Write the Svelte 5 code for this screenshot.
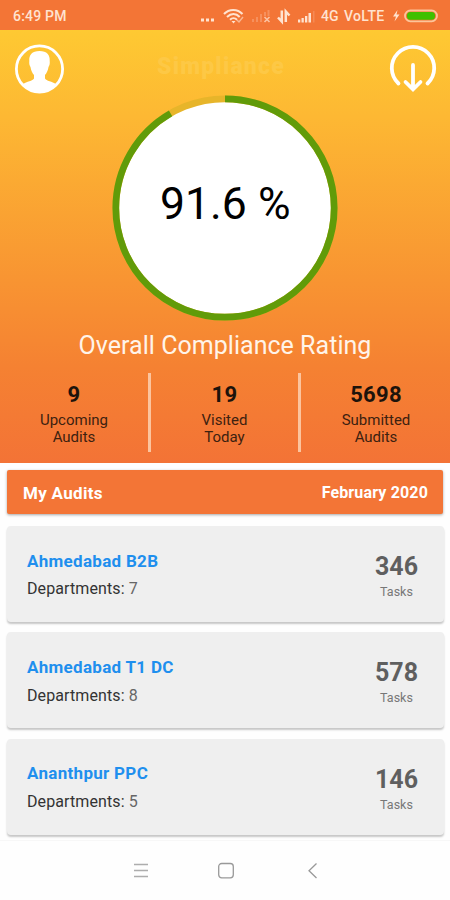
<script lang="ts">
  const rating = 91.6;
  const radius = 109.2;
  const circumference = 2 * Math.PI * radius;
  const offset = circumference * (1 - rating / 100);

  const stats = [
    { value: 9, label: ['Upcoming', 'Audits'] },
    { value: 19, label: ['Visited', 'Today'] },
    { value: 5698, label: ['Submitted', 'Audits'] },
  ];

  const audits = [
    { name: 'Ahmedabad B2B', departments: 7, tasks: 346 },
    { name: 'Ahmedabad T1 DC', departments: 8, tasks: 578 },
    { name: 'Ananthpur PPC', departments: 5, tasks: 146 },
  ];
</script>

<div class="screen">
  <div class="status">
    <span class="time">6:49 PM</span>
    <svg class="signals" width="118" height="30" viewBox="0 0 118 30" fill="#ffe3d0">
      <rect x="1" y="17.5" width="3" height="3" />
      <rect x="6" y="17.5" width="3" height="3" />
      <rect x="11" y="17.5" width="3" height="3" />
      <!-- Wifi -->
      <g fill="none" stroke="#ffe3d0" stroke-width="2">
        <path d="M24 13 C29 7.500 37.500 7.500 42.500 13" />
        <path d="M27 16 C31 12 36 12 39.700 16" />
        <path d="M30 18.700 C32 16.800 35 16.800 37 18.700" />
      </g>
      <path d="M31.500 20 L33.500 22.500 L35.500 20 Z" />
      <path d="M37 19 L39 21 L43 16" fill="none" stroke="#ffe3d0" stroke-opacity="0.6" stroke-width="1.5" />
      <!-- Missing SIM -->
      <g opacity="0.25">
        <rect x="52" y="18" width="2" height="3" />
        <rect x="56" y="16" width="2" height="5" />
        <rect x="60" y="13" width="2" height="8" />
        <rect x="64" y="11" width="2" height="4" />
        <rect x="67.5" y="9" width="2" height="6" />
      </g>
      <path d="M64.500 16 L69.500 21 M69.500 16 L64.500 21" stroke="#ffe3d0" stroke-opacity="0.7" stroke-width="1.6" />
      <!-- Data arrows -->
      <path d="M81.800 9.500 V20.500 L78 16.500 M85.800 21 V10.500 L89.500 14.500" fill="none" stroke="#ffe3d0" stroke-width="2.5" />
      <rect x="98" y="18.5" width="2.3" height="3" />
      <rect x="101.5" y="17" width="2.3" height="4.5" />
      <rect x="105" y="15" width="2.3" height="6.5" />
      <rect x="108.5" y="12" width="2.5" height="9.5" />
      <rect x="113" y="10" width="1.5" height="11.5" opacity="0.2" />
    </svg>
    <span class="network">4G</span>
    <span class="volte">VoLTE</span>
    <svg class="power" width="46" height="30" viewBox="0 0 46 30">
      <path d="M5.500 9 L1 15.500 H4 L2.500 20.500 L7.500 13.500 H4.500 Z" fill="#ffe3d0" />
      <rect x="13" y="9.5" width="32" height="10.8" rx="5.400" fill="none" stroke="#fcc49a" stroke-width="1.8" />
      <rect x="15" y="11" width="28" height="7.8" rx="3.5" fill="#3fc000" />
    </svg>
  </div>

  <section class="hero">
    <header>
      <svg width="50" height="50" viewBox="0 0 50 50">
        <circle cx="25.5" cy="25" r="23.1" fill="none" stroke="#fff" stroke-width="2.8" />
        <path
          d="M25.500 7 C18 7 14.800 11 15.300 17 C15 19.500 15.500 21.500 16.500 23 C17 26.500 18.300 29 20 31 V34.500 C19 37 12.500 37.500 9 40 C13 45.500 19 48.500 25.500 48.500 C32 48.500 38 45.500 42 40 C38.500 37.500 32 37 31 34.500 V31 C32.700 29 34 26.500 34.500 23 C35.500 21.500 36 19.500 35.700 17 C36.200 11 33 7 25.500 7 Z"
          fill="#fff"
        />
      </svg>
      <span class="brand">Simpliance</span>
      <svg width="50" height="50" viewBox="0 0 50 50" fill="none" stroke="#fff" stroke-width="3.8" stroke-linecap="round">
        <path d="M10.500 39.500 A21.200 21.200 0 1 1 39.500 39.500" />
        <path d="M25 21 V45 M17.500 38 L25 45.300 L32.500 38" />
      </svg>
    </header>

    <div class="ring">
      <svg width="226" height="226" viewBox="0 0 226 226">
        <circle cx="113" cy="113" r={radius} fill="#fff" stroke="#e7b52a" stroke-width="6.7" />
        <circle
          cx="113"
          cy="113"
          r={radius}
          fill="none"
          stroke="#619b09"
          stroke-width="6.7"
          stroke-dasharray={circumference}
          stroke-dashoffset={offset}
          transform="rotate(-90 113 113)"
        />
        <text x="113.3" y="124" text-anchor="middle">{rating} %</text>
      </svg>
    </div>

    <h1>Overall Compliance Rating</h1>

    <div class="stats">
      {#each stats as stat}
        <div class="stat">
          <strong>{stat.value}</strong>
          <span>{stat.label[0]}<br />{stat.label[1]}</span>
        </div>
      {/each}
    </div>
  </section>

  <main>
    <div class="heading">
      <span>My Audits</span>
      <span class="month">February 2020</span>
    </div>

    {#each audits as audit}
      <article class="card">
        <div>
          <h2>{audit.name}</h2>
          <p>Departments: <span>{audit.departments}</span></p>
        </div>
        <div class="tasks">
          <strong>{audit.tasks}</strong>
          <span>Tasks</span>
        </div>
      </article>
    {/each}
  </main>

  <nav>
    <svg width="16" height="18" viewBox="0 0 16 18" stroke="#adadad" stroke-width="1.3">
      <path d="M1 2.500 H15 M1 8.500 H15 M1 14.500 H15" />
    </svg>
    <svg width="18" height="18" viewBox="0 0 18 18" fill="none" stroke="#999" stroke-width="1.3">
      <rect x="1.7" y="1.5" width="14.6" height="14.3" rx="3" />
    </svg>
    <svg width="12" height="18" viewBox="0 0 12 18" fill="none" stroke="#999" stroke-width="1.3">
      <path d="M9.500 1.500 L2 8.700 L9.500 16" />
    </svg>
  </nav>
</div>

<style>
  :global(body) {
    margin: 0;
    background: #fff;
  }

  .screen {
    width: 450px;
    height: 900px;
    overflow: hidden;
    display: flex;
    flex-direction: column;
    font-family: Roboto, sans-serif;
    background: #fefefe;
  }

  svg {
    display: block;
    flex: none;
  }

  .status {
    height: 30px;
    flex: none;
    display: flex;
    align-items: center;
    box-sizing: border-box;
    padding: 1px 12px 0 13px;
    background: #f37536;
    color: #ffe3d0;
    font-size: 14px;
    font-weight: 500;
    line-height: 30px;
  }

  .time {
    letter-spacing: 0.2px;
  }

  .signals {
    margin-left: auto;
  }

  .network {
    width: 19px;
    margin: 0 4px 0 3px;
  }

  .volte {
    width: 40px;
    margin-right: 8px;
    letter-spacing: 0.3px;
  }

  .hero {
    height: 433px;
    flex: none;
    background: linear-gradient(#fec932 0%, #fdb833 20%, #f89432 58%, #f58132 78%, #f37336 100%);
  }

  header {
    display: flex;
    justify-content: space-between;
    align-items: flex-start;
    height: 65px;
    padding: 14px 12px 0 14px;
    box-sizing: border-box;
  }

  .brand {
    margin-right: 10px;
    color: #fdc845;
    font-size: 23px;
    font-weight: 900;
    letter-spacing: 1.2px;
    line-height: 46px;
  }

  .ring {
    display: flex;
    justify-content: center;
  }

  .ring text {
    font-size: 44.5px;
    fill: #000;
  }

  h1 {
    margin: 9px 0 0;
    color: #fff4e9;
    font-size: 25px;
    font-weight: 400;
    line-height: 32px;
    letter-spacing: 0.03px;
    text-align: center;
  }

  .stats {
    display: grid;
    grid-template-columns: 151px 150px 150px;
    margin-top: 11px;
  }

  .stat {
    height: 79px;
    display: flex;
    flex-direction: column;
    align-items: center;
    box-sizing: border-box;
    border-right: 3px solid #fcc49e;
    color: #3d2110;
  }

  .stat:last-child {
    border-right: 0;
  }

  .stat strong {
    margin-top: 8px;
    color: #1d130b;
    font-size: 22px;
    font-weight: 700;
    line-height: 27px;
    letter-spacing: 0.3px;
  }

  .stat span {
    margin-top: 4px;
    font-size: 15px;
    line-height: 17px;
    text-align: center;
  }

  main {
    height: 378px;
    flex: none;
    box-sizing: border-box;
    padding: 7px 6px 0 7px;
    border-bottom: 1px solid #f7f7f7;
  }

  .heading {
    display: flex;
    justify-content: space-between;
    height: 44px;
    margin-right: 1px;
    padding: 0 15px 0 16px;
    border-radius: 2px;
    background: #f37536;
    box-shadow: 0 1px 3px rgba(0, 0, 0, 0.35);
    color: #fff;
    font-size: 17px;
    font-weight: 700;
    line-height: 46px;
    letter-spacing: 0.3px;
  }

  .month {
    font-size: 16px;
    letter-spacing: 0.15px;
  }

  .card {
    display: flex;
    justify-content: space-between;
    height: 96px;
    margin-top: 10.3px;
    padding: 0 26px 0 20px;
    box-sizing: border-box;
    border-radius: 4px;
    background: #efefef;
    box-shadow: 0 2px 2px rgba(0, 0, 0, 0.22);
  }

  .heading + .card {
    margin-top: 12px;
  }

  h2 {
    margin: 23.7px 0 0;
    color: #1f8fee;
    font-size: 17px;
    font-weight: 700;
    line-height: 22px;
    letter-spacing: 0.3px;
  }

  p {
    margin: 6.6px 0 0;
    color: #333;
    font-size: 16px;
    line-height: 22px;
    letter-spacing: 0.1px;
  }

  p span {
    color: #666;
  }

  .tasks {
    display: flex;
    flex-direction: column;
    align-items: center;
    color: #777;
  }

  .tasks strong {
    margin-top: 26px;
    color: #5f5f5f;
    font-size: 25px;
    font-weight: 700;
    line-height: 30px;
  }

  .tasks span {
    margin-top: 2px;
    font-size: 12.5px;
    line-height: 16px;
  }

  nav {
    flex: 1;
    display: flex;
    gap: 68px;
    padding: 21px 0 0 133px;
  }

  nav svg:last-child {
    margin-left: 4px;
  }
</style>
